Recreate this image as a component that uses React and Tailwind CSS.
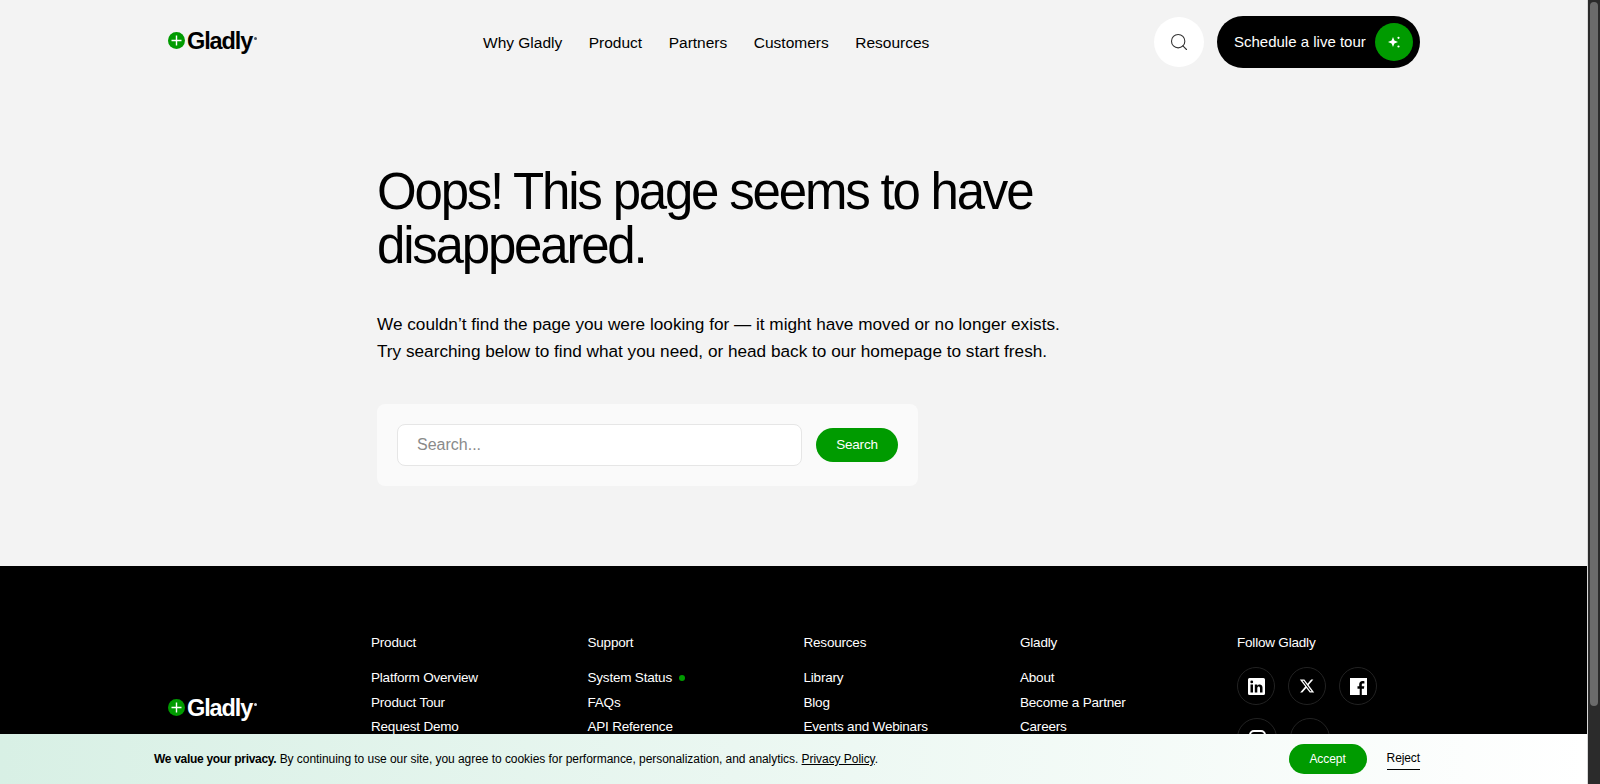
import { Search } from "lucide-react";

const columns = [
  { title: "Product", x: "w-[216.5px]", links: ["Platform Overview", "Product Tour", "Request Demo"] },
  { title: "Support", x: "w-[216px]", links: ["System Status", "FAQs", "API Reference"] },
  { title: "Resources", x: "w-[216.5px]", links: ["Library", "Blog", "Events and Webinars"] },
  { title: "Gladly", x: "w-[217px]", links: ["About", "Become a Partner", "Careers"] },
];

function Logo({ light }) {
  return (
    <div className="flex items-center gap-[2px]">
      <svg className="mb-[3px]" width="17" height="17" viewBox="0 0 17 17">
        <circle cx="8.5" cy="8.5" r="8.5" fill="#009b00" />
        <path d="M8.5 3.5v10M3.5 8.5h10" stroke="#fff" strokeWidth="1.4" />
      </svg>
      <span
        className={`text-[23.5px] leading-none font-bold tracking-[-1.1px] ${light ? "text-white" : "text-black"}`}
      >
        Gladly
      </span>
      <span className={`mb-2 h-[3px] w-[3px] rounded-full ${light ? "bg-gray-300" : "bg-gray-600"}`}></span>
    </div>
  );
}

function Sparkle() {
  return (
    <svg width="14" height="14" viewBox="0 0 14 14" fill="#fff">
      <path d="M6 2 7.400 5.600 11 7 7.400 8.400 6 12 4.600 8.400 1 7l3.600-1.400z" />
      <circle cx="11.500" cy="2.800" r="1.100" />
      <circle cx="11.500" cy="11.500" r="1.100" />
    </svg>
  );
}

function Social({ children, size = "w-[38px] h-[38px]" }) {
  return (
    <div className={`flex items-center justify-center rounded-full border border-[#222] ${size}`}>
      {children}
    </div>
  );
}

export default function App() {
  return (
    <div className="relative flex h-screen overflow-hidden bg-[#f3f3f3] font-['Liberation_Sans',sans-serif]">
      <div className="relative h-full w-[1587px] shrink-0 overflow-hidden">
        <header className="flex h-[84px] items-center pr-[167px] pl-[168px]">
          <div className="w-[315px]">
            <Logo />
          </div>
          <nav className="flex gap-[26.5px] pt-[1px] text-[15.5px] text-black">
            <a>Why Gladly</a>
            <a>Product</a>
            <a>Partners</a>
            <a>Customers</a>
            <a>Resources</a>
          </nav>
          <div className="ml-auto flex items-center gap-[13px]">
            <button className="flex h-[50px] w-[50px] items-center justify-center rounded-full bg-white">
              <Search size={20} strokeWidth={1.3} color="#333" />
            </button>
            <button className="flex h-[52px] w-[203px] items-center justify-between rounded-full bg-black pr-[7px] pl-[17px] text-[15px] whitespace-nowrap text-white">
              Schedule a live tour
              <span className="flex h-[38px] w-[38px] items-center justify-center rounded-full bg-[#009b00]">
                <Sparkle />
              </span>
            </button>
          </div>
        </header>

        <main className="h-[482px] pt-[81px] pl-[377px]">
          <h1 className="text-[51px] leading-[54px] font-normal tracking-[-2.2px] text-black">
            Oops! This page seems to have
            <br />
            disappeared.
          </h1>
          <p className="mt-[38px] text-[17.2px] leading-[27px] text-black">
            We couldn’t find the page you were looking for — it might have moved or no longer exists.
            <br />
            Try searching below to find what you need, or head back to our homepage to start fresh.
          </p>
          <div className="mt-[39px] flex h-[82px] w-[541px] items-center gap-[14px] rounded-lg bg-[#fafafa] px-5">
            <input
              placeholder="Search..."
              className="h-[42px] w-[405px] rounded-lg border border-[#e6e6e6] bg-white px-[19px] text-base outline-none placeholder:text-[#8a8a8a]"
            />
            <button className="h-[34px] w-[82px] rounded-full bg-[#009b00] text-[13.5px] tracking-[-0.2px] text-white">
              Search
            </button>
          </div>
        </main>

        <footer className="h-[218px] bg-black pt-[69px] text-white">
          <div className="flex">
            <div className="w-[371px] pt-[62px] pl-[168px]">
              <Logo light />
            </div>
            {columns.map((col) => (
              <div key={col.title} className={col.x}>
                <h3 className="text-[13.5px] leading-[16px] font-normal tracking-[-0.2px]">{col.title}</h3>
                <ul className="mt-[18px] flex flex-col gap-[7px] text-[13.5px] leading-[17.500px] tracking-[-0.2px]">
                  {col.links.map((link) => (
                    <li key={link} className="flex items-center gap-[7px]">
                      {link}
                      {link === "System Status" && (
                        <span className="h-[6px] w-[6px] rounded-full bg-[#009b00]"></span>
                      )}
                    </li>
                  ))}
                </ul>
              </div>
            ))}
            <div>
              <h3 className="text-[13.5px] leading-[16px] font-normal tracking-[-0.2px]">Follow Gladly</h3>
              <div className="mt-[16px] flex gap-[13px]">
                <Social>
                  <svg width="17" height="17" viewBox="0 0 17 17" fill="#fff">
                    <path d="M1.500 0h14A1.500 1.500 0 0 1 17 1.500v14a1.500 1.500 0 0 1-1.500 1.500h-14A1.500 1.500 0 0 1 0 15.500v-14A1.500 1.500 0 0 1 1.500 0zM2.500 6.500V14.500H5V6.500zM3.750 2.500a1.400 1.400 0 1 0 0 2.800 1.400 1.400 0 0 0 0-2.800zM6.800 6.500V14.500H9.300V10.300c0-2.200 2.700-2.300 2.700 0V14.500H14.500V9.600c0-3.800-4.100-3.700-5.200-1.800V6.500z" fillRule="evenodd" />
                  </svg>
                </Social>
                <Social>
                  <svg width="16" height="16" viewBox="0 0 24 24" fill="#fff">
                    <path d="M18.244 2.250h3.308l-7.227 8.260 8.502 11.240H16.170l-5.214-6.817L4.990 21.750H1.680l7.730-8.835L1.254 2.250H8.080l4.713 6.231zm-1.161 17.520h1.833L7.084 4.126H5.117z" />
                  </svg>
                </Social>
                <Social>
                  <svg width="17" height="17" viewBox="0 0 17 17" fill="#fff">
                    <path d="M0 0h17v17h-5.200v-6.300h2.100l.4-2.500h-2.500V6.700c0-.8.300-1.300 1.300-1.300h1.300V3.200c-.5-.1-1.200-.1-1.900-.1-2 0-3.300 1.200-3.300 3.400v1.700H7.500v2.500h2.200V17H0z" />
                  </svg>
                </Social>
              </div>
              <div className="mt-[13px] flex gap-[13px]">
                <Social size="w-[40px] h-[40px]">
                  <span className="h-[17px] w-[17px] rounded-[5px] border-2 border-white"></span>
                </Social>
                <Social size="w-[40px] h-[40px]"></Social>
              </div>
            </div>
          </div>
        </footer>

        <div className="absolute right-0 bottom-0 left-0 flex h-[50px] items-center bg-gradient-to-r from-[#d8f0e5] to-white pr-[167px] pl-[154px] text-xs tracking-[-0.05px] text-black">
          <p>
            <b className="font-bold tracking-[-0.3px]">We value your privacy.</b> By continuing to use our site, you agree to cookies
            for performance, personalization, and analytics. <a className="underline">Privacy Policy</a>.
          </p>
          <button className="ml-auto h-[30px] w-[78px] rounded-full bg-[#009b00] text-xs text-white">Accept</button>
          <a className="mt-[2px] ml-5 border-b border-black pb-[3px] text-xs tracking-[-0.1px]">Reject</a>
        </div>
      </div>

      <div className="h-full flex-1 border-l border-[#d8d8d8] bg-[#2b2b2b] px-[2px] pt-[2px]">
        <div className="h-[704px] w-full rounded-full bg-[#6b6b6b]"></div>
      </div>
    </div>
  );
}
